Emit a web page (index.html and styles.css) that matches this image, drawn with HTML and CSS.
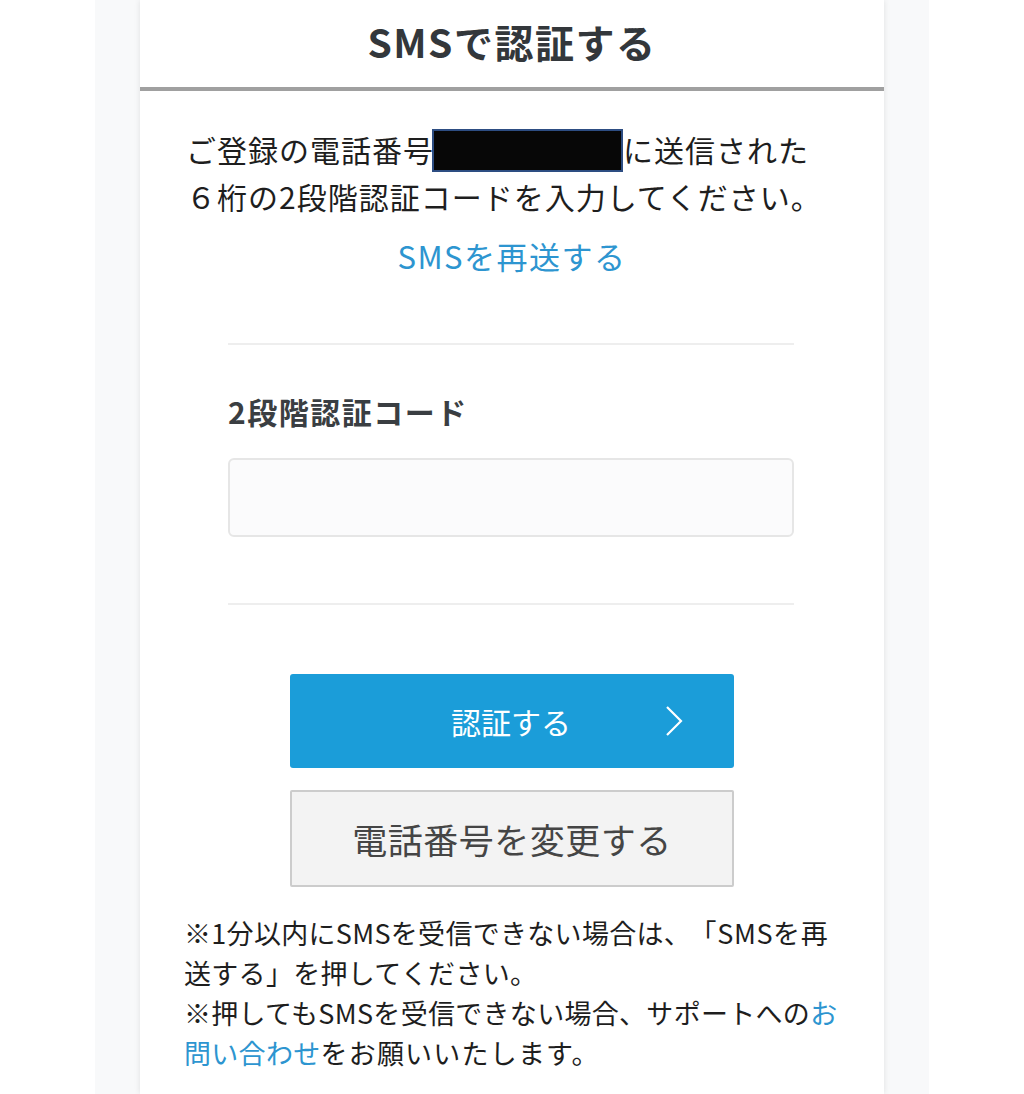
FILE: index.html
```html
<!DOCTYPE html>
<html lang="ja">
<head>
<meta charset="utf-8">
<title>SMSで認証する</title>
<link rel="stylesheet" href="styles.css">
</head>
<body>
<div class="band">
  <div class="card">
    <header class="head">
      <h1 class="title">SMSで認証する</h1>
    </header>
    <p class="intro">ご登録の電話番号<span class="mask"></span>に送信された<br>６桁の2段階認証コードを入力してください。</p>
    <a class="resend" href="#">SMSを再送する</a>
    <section class="form">
      <label class="label" for="code">2段階認証コード</label>
      <input class="input" id="code" type="text">
    </section>
    <div class="actions">
      <button class="btn btn-primary" type="button">
        <span>認証する</span>
        <svg class="chev" width="20" height="32" viewBox="0 0 20 32"><polyline points="3,2 17,16 3,30" fill="none" stroke="#fff" stroke-width="2.2"/></svg>
      </button>
      <button class="btn btn-secondary" type="button">電話番号を変更する</button>
    </div>
    <div class="notes">
      <p>※1分以内にSMSを受信できない場合は、<span class="bracket">「SMSを再</span><br>送する」を押してください。</p>
      <p>※押してもSMSを受信できない場合、サポートへの<a href="#">お<br>問い合わせ</a><span class="tail">をお願いいたします。</span></p>
    </div>
  </div>
</div>
</body>
</html>
```

FILE: styles.css
```css
* { box-sizing: border-box; }
html, body { margin: 0; padding: 0; background: #ffffff; }
body {
  font-family: "Noto Sans CJK JP", "Noto Sans", sans-serif;
  color: #1e1e1e;
}
.band {
  width: 834px;
  margin: 0 auto;
  background: #f8f9fa;
  min-height: 1094px;
  padding: 0 45px;
}
.card {
  background: #ffffff;
  min-height: 1094px;
  box-shadow: 0 0 6px rgba(0, 0, 0, 0.10);
  display: flex;
  flex-direction: column;
}
.head {
  height: 91px;
  border-bottom: 4px solid #a0a0a0;
  display: flex;
  align-items: center;
  justify-content: center;
}
.title {
  margin: 0;
  font-size: 39px;
  font-weight: 700;
  letter-spacing: 1.5px;
  color: #33373b;
  line-height: 1;
  padding-bottom: 4px;
}
.intro {
  margin: 35px 0 0 0;
  padding-left: 46px;
  font-size: 30px;
  line-height: 47px;
  letter-spacing: 1px;
}
.mask {
  display: inline-block;
  width: 191px;
  height: 43px;
  background: #070707;
  border: 2px solid #2d4d82;
  vertical-align: middle;
  margin: -6px 0 0 -2px;
}
.resend {
  align-self: center;
  margin-top: 12px;
  font-size: 31px;
  line-height: 47px;
  letter-spacing: 1.5px;
  color: #2d95d0;
  text-decoration: none;
}
.form {
  margin: 64px 90px 0 88px;
  border-top: 2px solid #eeeeee;
  border-bottom: 2px solid #eeeeee;
  padding: 46px 0 66px 0;
  display: flex;
  flex-direction: column;
}
.label {
  font-size: 30px;
  font-weight: 700;
  letter-spacing: 1.5px;
  color: #3a3e42;
  line-height: 40px;
}
.input {
  margin-top: 27px;
  height: 79px;
  border: 2px solid #e6e6e6;
  border-radius: 6px;
  background: #fbfbfc;
  font-size: 28px;
  padding: 0 16px;
}
.actions {
  margin-top: 69px;
  display: flex;
  flex-direction: column;
  align-items: center;
  gap: 22px;
}
.btn {
  width: 444px;
  font-family: inherit;
  cursor: pointer;
  display: flex;
  align-items: center;
  justify-content: center;
  position: relative;
}
.btn-primary {
  height: 94px;
  background: #1b9dd9;
  border: none;
  border-radius: 3px;
  color: #ffffff;
  font-size: 30px;
}
.btn-primary span { margin-left: -2px; }
.chev {
  position: absolute;
  right: 50px;
  top: 31px;
}
.btn-secondary {
  height: 97px;
  background: #f3f3f3;
  border: 2px solid #cccccc;
  border-radius: 2px;
  color: #454545;
  font-size: 35px;
  letter-spacing: 0.5px;
}
.notes {
  margin: 26px 20px 0 44px;
  font-size: 27px;
  line-height: 40px;
  letter-spacing: 0.3px;
}
.notes p { margin: 0; }
.bracket { margin-left: 12px; letter-spacing: 0.6px; }
.tail { letter-spacing: 1.2px; }
.notes a { color: #2d95d0; text-decoration: none; }
```
